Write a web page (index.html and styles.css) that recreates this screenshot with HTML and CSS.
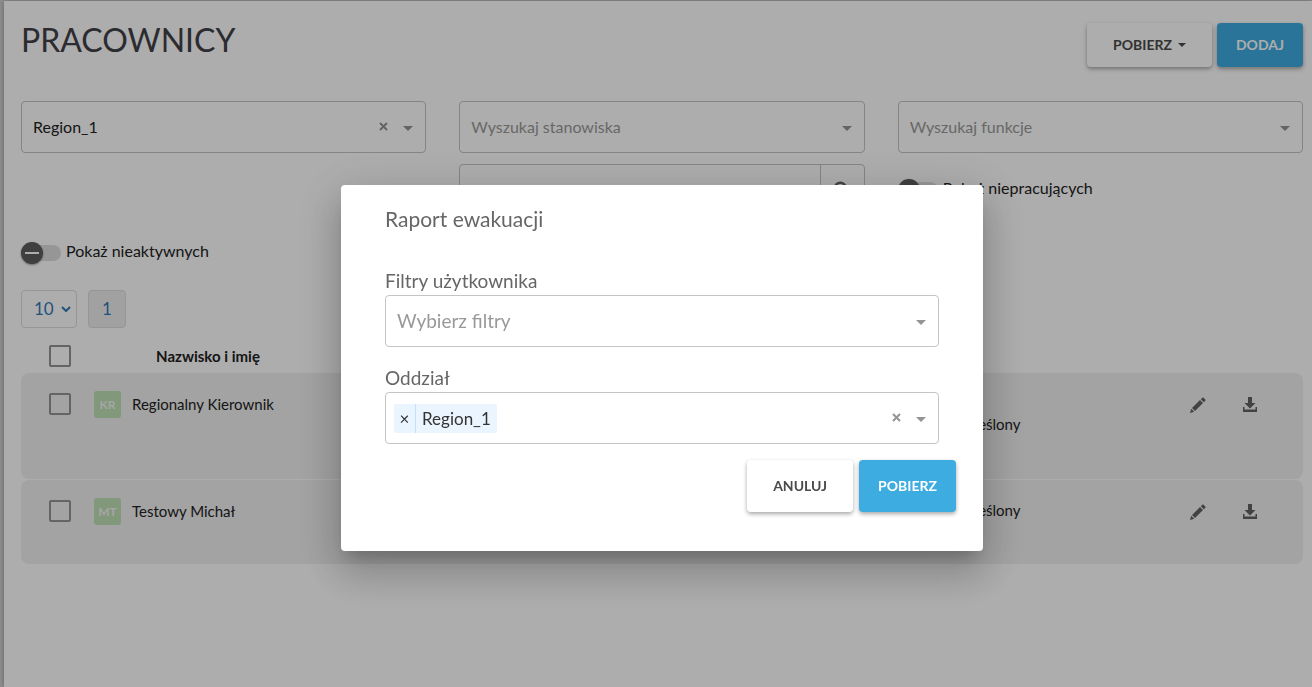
FILE: index.html
```html
<!DOCTYPE html>
<html lang="pl">
<head>
<meta charset="utf-8">
<meta name="viewport" content="width=device-width, initial-scale=1">
<title>Pracownicy</title>
<link rel="stylesheet" href="styles.css">
</head>
<body>
<svg width="0" height="0" class="sprite" aria-hidden="true">
  <symbol id="caret" viewBox="0 0 10 5"><path d="M0 0h10L5 5z"/></symbol>
  <symbol id="cross" viewBox="0 0 9 9"><path d="M1 1l7 7M8 1L1 8" fill="none" stroke="currentColor" stroke-width="2"/></symbol>
  <symbol id="pencil" viewBox="0 0 16 16"><path d="M0 16l1.200-4.200 3 3zM2 11l8-8 3 3-8 8zM10.800 2.200l1.500-1.500c.4-.4.8-.4 1.200 0l1.800 1.800c.4.400.4.800 0 1.200l-1.500 1.500z"/></symbol>
  <symbol id="download" viewBox="0 0 14 15"><path d="M5 0h4v6h3.500L7 11.500 1.500 6H5zM0 10h1.500v2.500h11V10H14v5H0z"/></symbol>
  <symbol id="search" viewBox="0 0 16 16"><path d="M6.500 1.500a5 5 0 1 0 0 10 5 5 0 0 0 0-10zM10.300 10.300L15 15" fill="none" stroke="currentColor" stroke-width="2.200"/></symbol>
</svg>

<main class="panel">
  <header class="page-head">
    <h1 class="page-title">PRACOWNICY</h1>
    <div class="head-actions">
      <button class="btn btn-plain" type="button">POBIERZ <svg class="btn-caret" aria-hidden="true"><use href="#caret"/></svg></button>
      <button class="btn btn-primary" type="button">DODAJ</button>
    </div>
  </header>

  <section class="filters">
    <div class="field">
      <select class="field-control" aria-label="Region"><option>Region_1</option></select>
      <div class="field-icons">
        <button class="clear" type="button" aria-label="Wyczyść"><svg class="cross"><use href="#cross"/></svg></button>
        <svg class="caret" aria-hidden="true"><use href="#caret"/></svg>
      </div>
    </div>
    <div class="field">
      <select class="field-control is-empty" aria-label="Stanowiska"><option>Wyszukaj stanowiska</option></select>
      <div class="field-icons"><svg class="caret" aria-hidden="true"><use href="#caret"/></svg></div>
    </div>
    <div class="field">
      <select class="field-control is-empty" aria-label="Funkcje"><option>Wyszukaj funkcje</option></select>
      <div class="field-icons"><svg class="caret" aria-hidden="true"><use href="#caret"/></svg></div>
    </div>
    <div class="search">
      <input class="search-input" type="text" placeholder="Szukaj" aria-label="Szukaj">
      <button class="search-btn" type="button" aria-label="Szukaj"><svg class="search-icon"><use href="#search"/></svg></button>
    </div>
    <label class="toggle"><input class="toggle-input" type="checkbox"><span class="toggle-text">Pokaż niepracujących</span></label>
    <label class="toggle toggle-first"><input class="toggle-input" type="checkbox"><span class="toggle-text">Pokaż nieaktywnych</span></label>
  </section>

  <nav class="pager" aria-label="Stronicowanie">
    <div class="page-size">
      <select class="page-size-select" aria-label="Liczba wierszy"><option>10</option></select>
      <svg class="chevron" viewBox="0 0 10 6" aria-hidden="true"><path d="M1 1l4 4 4-4" fill="none" stroke="currentColor" stroke-width="2"/></svg>
    </div>
    <button class="page-number" type="button">1</button>
  </nav>

  <table class="people">
    <colgroup><col class="col-check"><col class="col-name"><col><col class="col-term"><col class="col-edit"><col class="col-download"></colgroup>
    <thead>
      <tr>
        <th class="cell-check"><input class="check" type="checkbox" aria-label="Zaznacz wszystkich"></th>
        <th>Nazwisko i imię</th>
        <th></th><th></th><th></th><th></th>
      </tr>
    </thead>
    <tbody>
      <tr class="row-tall">
        <td class="cell-check"><input class="check" type="checkbox" aria-label="Zaznacz: Regionalny Kierownik"></td>
        <td><div class="person"><span class="avatar">KR</span><span>Regionalny Kierownik</span></div></td>
        <td></td>
        <td><br>Nieokreślony</td>
        <td class="cell-icon"><button class="icon-btn" type="button" aria-label="Edytuj"><svg class="pencil"><use href="#pencil"/></svg></button></td>
        <td class="cell-icon cell-last"><button class="icon-btn" type="button" aria-label="Pobierz"><svg class="download"><use href="#download"/></svg></button></td>
      </tr>
      <tr class="row-short">
        <td class="cell-check"><input class="check" type="checkbox" aria-label="Zaznacz: Testowy Michał"></td>
        <td><div class="person"><span class="avatar">MT</span><span>Testowy Michał</span></div></td>
        <td></td>
        <td>Nieokreślony</td>
        <td class="cell-icon"><button class="icon-btn" type="button" aria-label="Edytuj"><svg class="pencil"><use href="#pencil"/></svg></button></td>
        <td class="cell-icon cell-last"><button class="icon-btn" type="button" aria-label="Pobierz"><svg class="download"><use href="#download"/></svg></button></td>
      </tr>
    </tbody>
  </table>
</main>

<div class="scrim">
  <div class="dialog" role="dialog" aria-modal="true" aria-labelledby="dialog-title">
    <h2 class="dialog-title" id="dialog-title">Raport ewakuacji</h2>
    <div class="dialog-body">
      <div class="form-group">
        <label class="form-label" for="filters">Filtry użytkownika</label>
        <div class="field">
          <select class="field-control is-empty" id="filters"><option>Wybierz filtry</option></select>
          <div class="field-icons"><svg class="caret" aria-hidden="true"><use href="#caret"/></svg></div>
        </div>
      </div>
      <div class="form-group">
        <label class="form-label" for="branch">Oddział</label>
        <div class="field multi">
          <span class="chip"><button class="chip-remove" type="button" aria-label="Usuń Region_1">×</button><span class="chip-text">Region_1</span></span>
          <input class="multi-input" id="branch" type="text" role="combobox" aria-expanded="false">
          <button class="clear" type="button" aria-label="Wyczyść"><svg class="cross"><use href="#cross"/></svg></button>
          <svg class="caret" aria-hidden="true"><use href="#caret"/></svg>
        </div>
      </div>
    </div>
    <footer class="dialog-actions">
      <button class="btn btn-plain btn-tall" type="button">ANULUJ</button>
      <button class="btn btn-primary btn-tall" type="button">POBIERZ</button>
    </footer>
  </div>
</div>
</body>
</html>
```
FILE: styles.css
```css
* {
  box-sizing: border-box;
}

html {
  height: 100%;
}

body {
  margin: 0;
  min-height: 100%;
  display: flex;
  padding: 1px 0 0 4px;
  background: #d2d2d2;
  color: #222;
  font: 16px/22px Lato, "Open Sans", sans-serif;
}

button,
input,
select {
  margin: 0;
  font: inherit;
  color: inherit;
}

button {
  padding: 0;
  border: 0;
  background: none;
}

svg {
  display: block;
  fill: currentColor;
}

.sprite {
  position: absolute;
}

.panel {
  flex: 1;
  min-width: 0;
  padding: 22px 9px 22px 17px;
  background: #fff;
  box-shadow: 0 0 5px rgba(0, 0, 0, 0.3);
}

/* Header */
.page-head {
  display: flex;
  justify-content: space-between;
  margin-bottom: 34px;
}

.page-title {
  margin: 0;
  color: #424248;
  font-size: 32px;
  font-weight: 400;
  line-height: 34px;
}

.head-actions {
  display: flex;
  gap: 5px;
}

.btn {
  display: flex;
  align-items: center;
  justify-content: center;
  gap: 6px;
  height: 44px;
  padding: 0 19px;
  border-radius: 4px;
  box-shadow: 0 2px 4px rgba(0, 0, 0, 0.35);
  font-size: 14px;
  font-weight: 700;
}

.btn-plain {
  padding: 0 26px;
  background: #fff;
  color: #4a4a4a;
}

.btn-primary {
  background: #3dace1;
  color: #fff;
}

.btn-tall {
  height: 52px;
}

.btn-caret {
  width: 8px;
  height: 4px;
}

/* Filters */
.filters {
  display: grid;
  grid-template-columns: repeat(3, minmax(0, 1fr));
  grid-auto-rows: 52px;
  gap: 11px 33px;
  margin-bottom: 11px;
}

.field {
  display: grid;
  min-height: 52px;
}

.field-control {
  grid-area: 1 / 1;
  width: 100%;
  padding: 0 11px;
  border: 1px solid #c4c4c4;
  border-radius: 4px;
  background: #fff;
  appearance: none;
}

.is-empty {
  color: #999;
}

.field-icons {
  grid-area: 1 / 1;
  justify-self: end;
  display: flex;
  align-items: center;
  gap: 15px;
  padding-right: 13px;
  pointer-events: none;
}

.caret {
  width: 10px;
  height: 5px;
  margin-top: 3px;
  color: #949494;
}

.clear {
  padding-bottom: 2px;
  color: #949494;
  pointer-events: auto;
}

.cross {
  width: 9px;
  height: 9px;
}

.search {
  grid-column: 2;
  display: flex;
  border: 1px solid #c4c4c4;
  border-radius: 4px;
}

.search-input {
  flex: 1;
  min-width: 0;
  padding: 0 13px;
  border: 0;
  background: none;
}

.search-btn {
  display: grid;
  place-items: center;
  width: 44px;
  border-left: 1px solid #c4c4c4;
  color: #666;
}

.search-icon {
  width: 18px;
  height: 18px;
}

.toggle {
  display: flex;
  align-items: center;
  gap: 5px;
}

.toggle-first {
  grid-column: 1;
}

.toggle-input {
  display: grid;
  align-items: center;
  width: 40px;
  height: 22px;
  appearance: none;
}

.toggle-input::before,
.toggle-input::after {
  grid-area: 1 / 1;
  content: "";
}

.toggle-input::before {
  height: 16px;
  border-radius: 8px;
  background: #dedede;
}

.toggle-input::after {
  width: 22px;
  height: 22px;
  border-radius: 50%;
  background: linear-gradient(#fff, #fff) center / 14px 2px no-repeat #5e5e5e;
  box-shadow: 0 1px 2px rgba(0, 0, 0, 0.4);
}

.toggle-text {
  padding-bottom: 4px;
}

/* Pager */
.pager {
  display: flex;
  gap: 11px;
  margin-bottom: 11px;
  color: #337ab7;
  font-size: 17px;
  line-height: 36px;
}

.page-size {
  display: grid;
  align-items: center;
  width: 56px;
}

.page-size-select {
  grid-area: 1 / 1;
  height: 38px;
  padding: 0 12px;
  border: 1px solid #ddd;
  border-radius: 4px;
  background: #fff;
  appearance: none;
}

.chevron {
  grid-area: 1 / 1;
  justify-self: end;
  width: 10px;
  height: 6px;
  margin-right: 6px;
  pointer-events: none;
}

.page-number {
  width: 38px;
  height: 38px;
  border: 1px solid #ddd;
  border-radius: 4px;
  background: #eee;
}

/* Table */
.people {
  width: 100%;
  table-layout: fixed;
  border-spacing: 0 1px;
  font-size: 15px;
  line-height: 21px;
}

.col-check {
  width: 73px;
}

.col-name {
  width: 228px;
}

.col-term {
  width: 238px;
}

.col-edit {
  width: 52px;
}

.col-download {
  width: 79px;
}

.people th {
  height: 32px;
  padding: 0;
}

.people td {
  padding: 20px 0 0;
  background: #f0f0f0;
  vertical-align: top;
}

.people .cell-check {
  padding-left: 28px;
  border-radius: 8px 0 0 8px;
}

.people .cell-icon {
  padding-top: 24px;
}

.people .cell-last {
  border-radius: 0 8px 8px 0;
}

.row-tall {
  height: 106px;
}

.row-short {
  height: 84px;
}

.check {
  display: block;
  width: 22px;
  height: 22px;
  border: 2px solid #949494;
  border-radius: 2px;
  appearance: none;
}

.person {
  display: flex;
  align-items: center;
  gap: 11px;
  height: 22px;
}

.avatar {
  width: 27px;
  border-radius: 3px;
  background: #bee0b6;
  color: #f4f4f4;
  font-size: 12px;
  font-weight: 700;
  line-height: 27px;
  text-align: center;
}

.icon-btn {
  display: grid;
  justify-items: center;
  width: 52px;
  color: #626262;
}

.pencil {
  width: 16px;
  height: 16px;
}

.download {
  width: 14px;
  height: 15px;
}

/* Dialog */
.scrim {
  position: fixed;
  inset: 0;
  display: flex;
  align-items: center;
  justify-content: center;
  padding: 49px 0 0 12px;
  background: rgba(0, 0, 0, 0.32);
}

.dialog {
  width: 642px;
  max-width: 100%;
  border-radius: 4px;
  background: #fff;
  box-shadow: 0 11px 15px -7px rgba(0, 0, 0, 0.2), 0 24px 38px 3px rgba(0, 0, 0, 0.14), 0 9px 46px 8px rgba(0, 0, 0, 0.12);
  color: #666;
  font-size: 19px;
}

.dialog-title {
  margin: 0;
  padding: 20px 44px 0;
  font-size: 21px;
  font-weight: 400;
  line-height: 28px;
}

.dialog-body {
  display: grid;
  gap: 19px;
  padding: 36px 44px 0;
}

.form-label {
  display: block;
  padding-bottom: 3px;
  line-height: 23px;
}

.multi {
  display: flex;
  align-items: center;
  gap: 15px;
  padding: 0 12px 0 8px;
  border: 1px solid #c4c4c4;
  border-radius: 4px;
}

.multi-input {
  flex: 1;
  min-width: 0;
  border: 0;
  outline: 0;
  background: none;
}

.chip {
  display: flex;
  border-radius: 2px;
  background: #ebf5ff;
  color: #333;
  font-size: 17px;
  line-height: 29px;
}

.chip-remove {
  width: 22px;
  border-right: 1px solid #c2e0ff;
}

.chip-text {
  padding: 0 6px;
}

.dialog-actions {
  display: flex;
  justify-content: flex-end;
  gap: 6px;
  padding: 16px 27px 39px;
}
```
